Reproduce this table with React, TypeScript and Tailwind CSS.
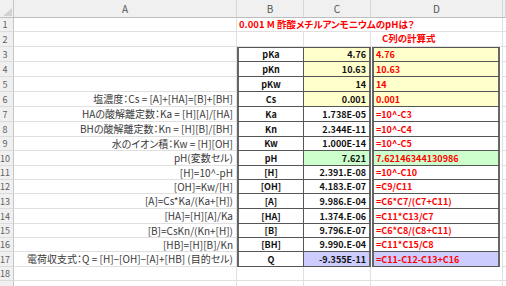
import React from "react";

type Bg = "y" | "g" | "p" | "w";

const ROWH = [14, 15, 15, 15, 15, 15, 15, 15, 14, 15, 14, 14, 15, 15, 14, 14, 15];

const DATA: { a: string; b: string; c: string; d: string; bg: Bg }[] = [
  { a: "", b: "pKa", c: "4.76", d: "4.76", bg: "y" },
  { a: "", b: "pKn", c: "10.63", d: "10.63", bg: "y" },
  { a: "", b: "pKw", c: "14", d: "14", bg: "y" },
  { a: "塩濃度：Cs = [A]+[HA]=[B]+[BH]", b: "Cs", c: "0.001", d: "0.001", bg: "y" },
  { a: "HAの酸解離定数：Ka = [H][A]/[HA]", b: "Ka", c: "1.738E-05", d: "=10^-C3", bg: "w" },
  { a: "BHの酸解離定数：Kn = [H][B]/[BH]", b: "Kn", c: "2.344E-11", d: "=10^-C4", bg: "w" },
  { a: "水のイオン積：Kw = [H][OH]", b: "Kw", c: "1.000E-14", d: "=10^-C5", bg: "w" },
  { a: "pH(変数セル)", b: "pH", c: "7.621", d: "7.62146344130986", bg: "g" },
  { a: "[H]=10^-pH", b: "[H]", c: "2.391.E-08", d: "=10^-C10", bg: "w" },
  { a: "[OH]=Kw/[H]", b: "[OH]", c: "4.183.E-07", d: "=C9/C11", bg: "w" },
  { a: "[A]=Cs*Ka/(Ka+[H])", b: "[A]", c: "9.986.E-04", d: "=C6*C7/(C7+C11)", bg: "w" },
  { a: "[HA]=[H][A]/Ka", b: "[HA]", c: "1.374.E-06", d: "=C11*C13/C7", bg: "w" },
  { a: "[B]=CsKn/(Kn+[H])", b: "[B]", c: "9.796.E-07", d: "=C6*C8/(C8+C11)", bg: "w" },
  { a: "[HB]=[H][B]/Kn", b: "[BH]", c: "9.990.E-04", d: "=C11*C15/C8", bg: "w" },
  { a: "電荷収支式：Q = [H]−[OH]−[A]+[HB] (目的セル)", b: "Q", c: "-9.355E-11", d: "=C11-C12-C13+C16", bg: "p" },
];

const bgClass = (bg: Bg) =>
  bg === "y" ? "bg-[#ffffcc]" : bg === "g" ? "bg-[#ccffcc]" : bg === "p" ? "bg-[#ccccff]" : "bg-white";

const GRID = "grid grid-cols-[14px_223px_67px_67px_132px_3px]";

function RowNum({ n }: { n?: number }) {
  return (
    <div className="flex items-center justify-center pr-[3px] bg-[#f0f0f0] border-r border-b border-r-[#c6c6c6] border-b-[#dcdcdc] text-[9px] text-[#5f5f5f] leading-none">
      {n}
    </div>
  );
}

export default function App() {
  return (
    <div className="w-[506px] h-[286px] overflow-hidden bg-white font-['Noto_Sans_CJK_JP',sans-serif]">
      {/* header */}
      <div className={`${GRID} h-[18px]`}>
        <div className="relative bg-[#f0f0f0] border-r border-b border-r-[#c6c6c6] border-b-[#bdbdbd]">
          <svg className="absolute right-[1px] bottom-[1px]" width="9" height="8" viewBox="0 0 9 8">
            <polygon points="9,0 9,8 0,8" fill="#d2d2d2" />
          </svg>
        </div>
        {["A", "B", "C", "D", ""].map((l, i) => (
          <div
            key={i}
            className="flex items-center justify-center bg-[#f0f0f0] border-r border-b border-r-[#d6d6d6] border-b-[#bdbdbd] text-[10px] text-[#555] leading-none"
          >
            {l}
          </div>
        ))}
      </div>

      {/* row 1 */}
      <div className={GRID} style={{ height: ROWH[0] }}>
        <RowNum n={1} />
        <div className="border-r border-b border-[#e0e0e0]" />
        <div className="col-span-3 flex items-center pl-[2px] border-r border-b border-[#e0e0e0] text-[9.5px] font-bold text-[#ff0000] whitespace-nowrap leading-none [font-feature-settings:'palt']">
          0.001 M 酢酸メチルアンモニウムのpHは？
        </div>
        <div className="border-b border-[#e0e0e0]" />
      </div>

      {/* row 2 */}
      <div className={GRID} style={{ height: ROWH[1] }}>
        <RowNum n={2} />
        <div className="border-r border-b border-[#e0e0e0]" />
        <div className="border-r border-b border-[#e0e0e0]" />
        <div className="border-r border-b border-[#e0e0e0]" />
        <div className="flex items-center pl-[11px] border-r border-b border-[#e0e0e0] text-[9.5px] font-bold text-[#ff0000] whitespace-nowrap leading-none [font-feature-settings:'palt']">
          C列の計算式
        </div>
        <div className="border-b border-[#e0e0e0]" />
      </div>

      {/* rows 3-17 */}
      {DATA.map((r, i) => {
        const n = i + 3;
        const first = i === 0;
        return (
          <div key={n} className={GRID} style={{ height: ROWH[n - 1] }}>
            <RowNum n={n} />
            <div className="flex items-center justify-end pr-[3px] border-r border-b border-[#e0e0e0] text-[10px] text-[#3a3a3a] whitespace-nowrap leading-none [font-feature-settings:'palt']">
              {r.a}
            </div>
            <div
              className={`flex items-center justify-center border-l-2 border-l-[#666] border-r border-r-[#555] border-b border-b-[#555] ${
                first ? "border-t border-t-[#555]" : ""
              } text-[9px] font-bold text-[#111] leading-none`}
            >
              {r.b}
            </div>
            <div
              className={`flex items-center justify-end pr-[3px] border-r-2 border-r-[#666] border-b border-b-[#555] ${
                first ? "border-t border-t-[#555]" : ""
              } ${bgClass(r.bg)} text-[9px] font-bold text-[#111] leading-none`}
            >
              {r.c}
            </div>
            <div className="flex pl-[1px] pr-[2px] border-r border-r-[#e0e0e0]">
              <div
                className={`flex-1 flex items-center pl-[2px] border-l-2 border-l-[#666] border-r-2 border-r-[#666] border-b border-b-[#555] ${
                  first ? "border-t border-t-[#555]" : ""
                } ${bgClass(r.bg)} text-[9px] font-bold text-[#ff0000] whitespace-nowrap leading-none`}
              >
                {r.d}
              </div>
            </div>
            <div className="border-b border-[#e0e0e0]" />
          </div>
        );
      })}

      {/* row 18-19 */}
      {[18, 19].map((n) => (
        <div key={n} className={GRID} style={{ height: 14 }}>
          <RowNum n={n === 18 ? n : undefined} />
          <div className="border-r border-b border-[#e0e0e0]" />
          <div className="border-r border-b border-[#e0e0e0]" />
          <div className="border-r border-b border-[#e0e0e0]" />
          <div className="border-r border-b border-[#e0e0e0]" />
          <div className="border-b border-[#e0e0e0]" />
        </div>
      ))}
    </div>
  );
}
